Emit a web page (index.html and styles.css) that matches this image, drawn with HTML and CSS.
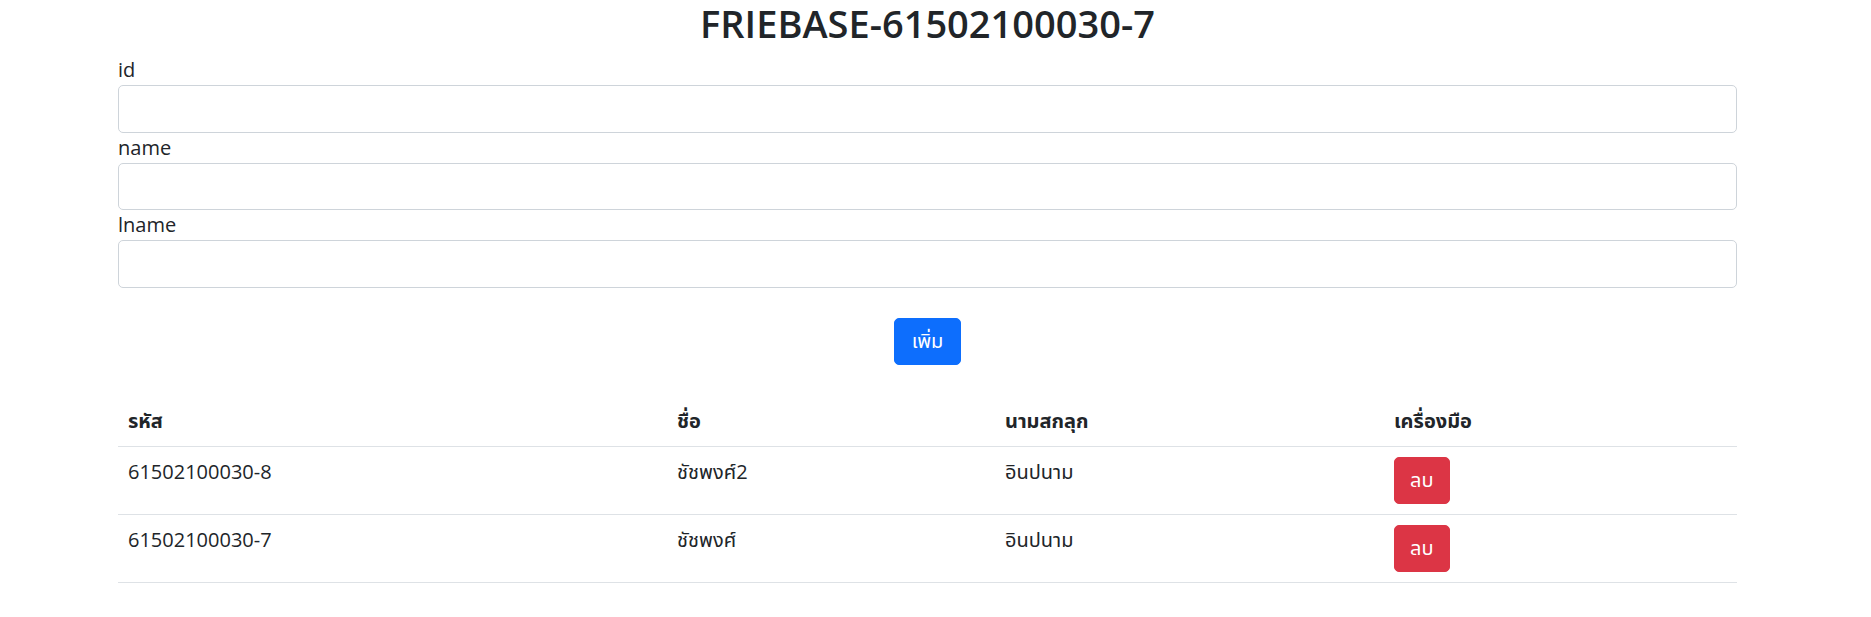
FILE: index.html
```html
<!DOCTYPE html>
<html lang="th">
<head>
<meta charset="utf-8">
<title>FRIEBASE-61502100030-7</title>
<link rel="stylesheet" href="styles.css">
</head>
<body>
<div class="container">
  <h2 class="title">FRIEBASE-61502100030-7</h2>
  <form class="form">
    <label class="label" for="id">id</label>
    <input class="input" id="id" type="text">
    <label class="label" for="name">name</label>
    <input class="input" id="name" type="text">
    <label class="label" for="lname">lname</label>
    <input class="input" id="lname" type="text">
    <div class="actions">
      <button type="button" class="btn btn-primary">เพิ่ม</button>
    </div>
  </form>
  <table class="table">
    <thead>
      <tr>
        <th class="col-id">รหัส</th>
        <th class="col-name">ชื่อ</th>
        <th class="col-lname">นามสกลุก</th>
        <th class="col-tools">เครื่องมือ</th>
      </tr>
    </thead>
    <tbody>
      <tr>
        <td>61502100030-8</td>
        <td>ชัชพงศ์2</td>
        <td>อินปนาม</td>
        <td><button type="button" class="btn btn-danger">ลบ</button></td>
      </tr>
      <tr>
        <td>61502100030-7</td>
        <td>ชัชพงศ์</td>
        <td>อินปนาม</td>
        <td><button type="button" class="btn btn-danger">ลบ</button></td>
      </tr>
    </tbody>
  </table>
</div>
</body>
</html>
```

FILE: styles.css
```css
html, body {
  margin: 0;
  padding: 0;
  background: #fff;
}
body {
  font-family: "Open Sans", "Noto Sans Thai", "Noto Sans Thai UI", "Loma", "Garuda", "Tlwg Typo", "Leelawadee UI", Tahoma, sans-serif;
  font-size: 20px;
  line-height: 30px;
  color: #212529;
}
.container {
  margin: 0 134px 0 118px;
}
.title {
  margin: -1px 0 8px 0;
  font-size: 38px;
  line-height: 48px;
  font-weight: 600;
  text-align: center;
}
.form {
  margin: 0;
}
.label {
  display: block;
  line-height: 30px;
}
.input {
  display: block;
  box-sizing: border-box;
  width: 100%;
  height: 47.5px;
  margin: 0;
  padding: 7.5px 15px;
  font: inherit;
  border: 1px solid #ced4da;
  border-radius: 5px;
  background: #fff;
}
.actions {
  display: flex;
  justify-content: center;
  margin-top: 30px;
}
.btn {
  font: inherit;
  line-height: 30px;
  padding: 7.5px 15px;
  border: 1px solid transparent;
  border-radius: 5px;
  color: #fff;
  cursor: pointer;
}
.btn-primary {
  background: #0d6efd;
  border-color: #0d6efd;
  padding: 7.5px 17px;
}
.btn-danger {
  background: #dc3545;
  border-color: #dc3545;
}
.table {
  width: 100%;
  table-layout: fixed;
  margin-top: 31px;
  border-collapse: collapse;
  vertical-align: top;
}
.table th,
.table td {
  box-sizing: border-box;
  text-align: left;
  padding: 10px;
  border-bottom: 1px solid #dee2e6;
  vertical-align: top;
}
.table th {
  font-weight: 700;
}
.col-id { width: 549px; }
.col-name { width: 328px; }
.col-lname { width: 389px; }
.col-tools { width: 353px; }
```
